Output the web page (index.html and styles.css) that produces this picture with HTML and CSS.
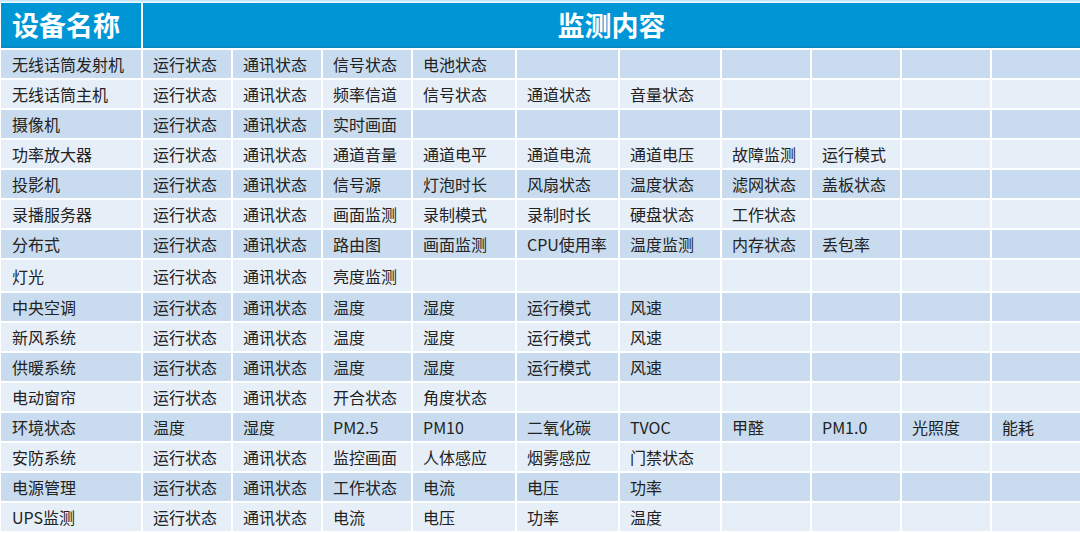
FILE: index.html
```html
<!DOCTYPE html>
<html lang="zh-CN">
<head>
<meta charset="utf-8">
<title>监测内容</title>
<link rel="stylesheet" href="styles.css">
</head>
<body>
<div class="table">
  <div class="hcell hname">设备名称</div>
  <div class="hcell hcontent">监测内容</div>

  <div class="c d first">无线话筒发射机</div><div class="c d">运行状态</div><div class="c d">通讯状态</div><div class="c d">信号状态</div><div class="c d">电池状态</div><div class="c d"></div><div class="c d"></div><div class="c d"></div><div class="c d"></div><div class="c d"></div><div class="c d"></div>

  <div class="c l first">无线话筒主机</div><div class="c l">运行状态</div><div class="c l">通讯状态</div><div class="c l">频率信道</div><div class="c l">信号状态</div><div class="c l">通道状态</div><div class="c l">音量状态</div><div class="c l"></div><div class="c l"></div><div class="c l"></div><div class="c l"></div>

  <div class="c d first">摄像机</div><div class="c d">运行状态</div><div class="c d">通讯状态</div><div class="c d">实时画面</div><div class="c d"></div><div class="c d"></div><div class="c d"></div><div class="c d"></div><div class="c d"></div><div class="c d"></div><div class="c d"></div>

  <div class="c l first">功率放大器</div><div class="c l">运行状态</div><div class="c l">通讯状态</div><div class="c l">通道音量</div><div class="c l">通道电平</div><div class="c l">通道电流</div><div class="c l">通道电压</div><div class="c l">故障监测</div><div class="c l">运行模式</div><div class="c l"></div><div class="c l"></div>

  <div class="c d first">投影机</div><div class="c d">运行状态</div><div class="c d">通讯状态</div><div class="c d">信号源</div><div class="c d">灯泡时长</div><div class="c d">风扇状态</div><div class="c d">温度状态</div><div class="c d">滤网状态</div><div class="c d">盖板状态</div><div class="c d"></div><div class="c d"></div>

  <div class="c l first">录播服务器</div><div class="c l">运行状态</div><div class="c l">通讯状态</div><div class="c l">画面监测</div><div class="c l">录制模式</div><div class="c l">录制时长</div><div class="c l">硬盘状态</div><div class="c l">工作状态</div><div class="c l"></div><div class="c l"></div><div class="c l"></div>

  <div class="c d first">分布式</div><div class="c d">运行状态</div><div class="c d">通讯状态</div><div class="c d">路由图</div><div class="c d">画面监测</div><div class="c d">CPU使用率</div><div class="c d">温度监测</div><div class="c d">内存状态</div><div class="c d">丢包率</div><div class="c d"></div><div class="c d"></div>

  <div class="c l first">灯光</div><div class="c l">运行状态</div><div class="c l">通讯状态</div><div class="c l">亮度监测</div><div class="c l"></div><div class="c l"></div><div class="c l"></div><div class="c l"></div><div class="c l"></div><div class="c l"></div><div class="c l"></div>

  <div class="c d first">中央空调</div><div class="c d">运行状态</div><div class="c d">通讯状态</div><div class="c d">温度</div><div class="c d">湿度</div><div class="c d">运行模式</div><div class="c d">风速</div><div class="c d"></div><div class="c d"></div><div class="c d"></div><div class="c d"></div>

  <div class="c l first">新风系统</div><div class="c l">运行状态</div><div class="c l">通讯状态</div><div class="c l">温度</div><div class="c l">湿度</div><div class="c l">运行模式</div><div class="c l">风速</div><div class="c l"></div><div class="c l"></div><div class="c l"></div><div class="c l"></div>

  <div class="c d first">供暖系统</div><div class="c d">运行状态</div><div class="c d">通讯状态</div><div class="c d">温度</div><div class="c d">湿度</div><div class="c d">运行模式</div><div class="c d">风速</div><div class="c d"></div><div class="c d"></div><div class="c d"></div><div class="c d"></div>

  <div class="c l first">电动窗帘</div><div class="c l">运行状态</div><div class="c l">通讯状态</div><div class="c l">开合状态</div><div class="c l">角度状态</div><div class="c l"></div><div class="c l"></div><div class="c l"></div><div class="c l"></div><div class="c l"></div><div class="c l"></div>

  <div class="c d first">环境状态</div><div class="c d">温度</div><div class="c d">湿度</div><div class="c d">PM2.5</div><div class="c d">PM10</div><div class="c d">二氧化碳</div><div class="c d">TVOC</div><div class="c d">甲醛</div><div class="c d">PM1.0</div><div class="c d">光照度</div><div class="c d">能耗</div>

  <div class="c l first">安防系统</div><div class="c l">运行状态</div><div class="c l">通讯状态</div><div class="c l">监控画面</div><div class="c l">人体感应</div><div class="c l">烟雾感应</div><div class="c l">门禁状态</div><div class="c l"></div><div class="c l"></div><div class="c l"></div><div class="c l"></div>

  <div class="c d first">电源管理</div><div class="c d">运行状态</div><div class="c d">通讯状态</div><div class="c d">工作状态</div><div class="c d">电流</div><div class="c d">电压</div><div class="c d">功率</div><div class="c d"></div><div class="c d"></div><div class="c d"></div><div class="c d"></div>

  <div class="c l first">UPS监测</div><div class="c l">运行状态</div><div class="c l">通讯状态</div><div class="c l">电流</div><div class="c l">电压</div><div class="c l">功率</div><div class="c l">温度</div><div class="c l"></div><div class="c l"></div><div class="c l"></div><div class="c l"></div>
</div>
</body>
</html>
```

FILE: styles.css
```css
html, body {
  margin: 0;
  padding: 0;
  background: #ffffff;
}
body {
  width: 1080px;
  height: 534px;
  overflow: hidden;
  font-family: "Noto Sans CJK SC", "Noto Sans", sans-serif;
}
.table {
  display: grid;
  grid-template-columns: 140px 88px 88px 88px 102px 101px 100px 88px 88px 88px 88px;
  grid-template-rows: 45px repeat(7, 28px) 31px repeat(8, 28px);
  column-gap: 2px;
  row-gap: 2px;
  padding: 3px 0 0 1px;
  background: linear-gradient(#b4e0f3, #ffffff 3px);
}
.hcell {
  background: #0096d6;
  border-bottom: 2px solid #0a89c7;
  color: #ffffff;
  font-weight: 700;
  font-size: 27px;
  display: flex;
  align-items: center;
  line-height: 1;
}
.hname {
  padding-left: 11px;
}
.hcontent {
  grid-column: 2 / 12;
  justify-content: center;
}
.c {
  display: flex;
  align-items: center;
  padding-left: 10px;
  font-size: 16px;
  color: #222222;
  white-space: nowrap;
  line-height: 1;
}
.first {
  padding-left: 11px;
}
.d {
  background: #c9dcef;
}
.l {
  background: #e6eef8;
}
```
